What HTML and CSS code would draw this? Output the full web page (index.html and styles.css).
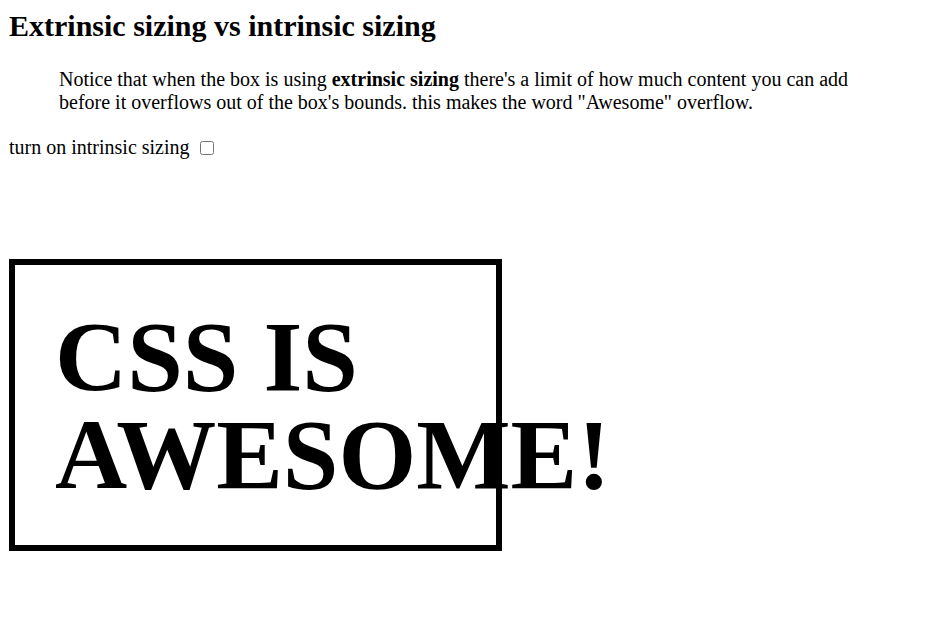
FILE: index.html
```html
<!DOCTYPE html>
<html>
<head>
<meta charset="utf-8">
<link rel="stylesheet" href="styles.css">
</head>
<body>
<h2 class="title">Extrinsic sizing vs intrinsic sizing</h2>
<blockquote class="note">Notice that when the box is using <b>extrinsic sizing</b> there's a limit of how much content you can add before it overflows out of the box's bounds. this makes the word "Awesome" overflow.</blockquote>
<label class="toggle">turn on intrinsic sizing <input type="checkbox" class="check"></label>
<div class="box">CSS IS AWESOME!</div>
</body>
</html>
```
FILE: styles.css
```css
html { background: #fff; }
body {
  margin: 9px 9px;
  font-family: "Liberation Serif", "Times New Roman", serif;
  font-size: 20px;
  color: #000;
}
.title {
  margin: 0 0 25px;
  font-size: 30px;
  font-weight: bold;
}
.note {
  margin: 0 40px 22px 50px;
}
.toggle {
  display: block;
}
.check {
  width: 14px;
  height: 14px;
  margin: 0 0 0 5px;
  vertical-align: -1px;
}
.box {
  box-sizing: border-box;
  margin-top: 100px;
  width: 493px;
  height: 292px;
  border: 6px solid #000;
  padding: 43px 40px;
  font-size: 100px;
  font-weight: bold;
  line-height: 98px;
}
```
